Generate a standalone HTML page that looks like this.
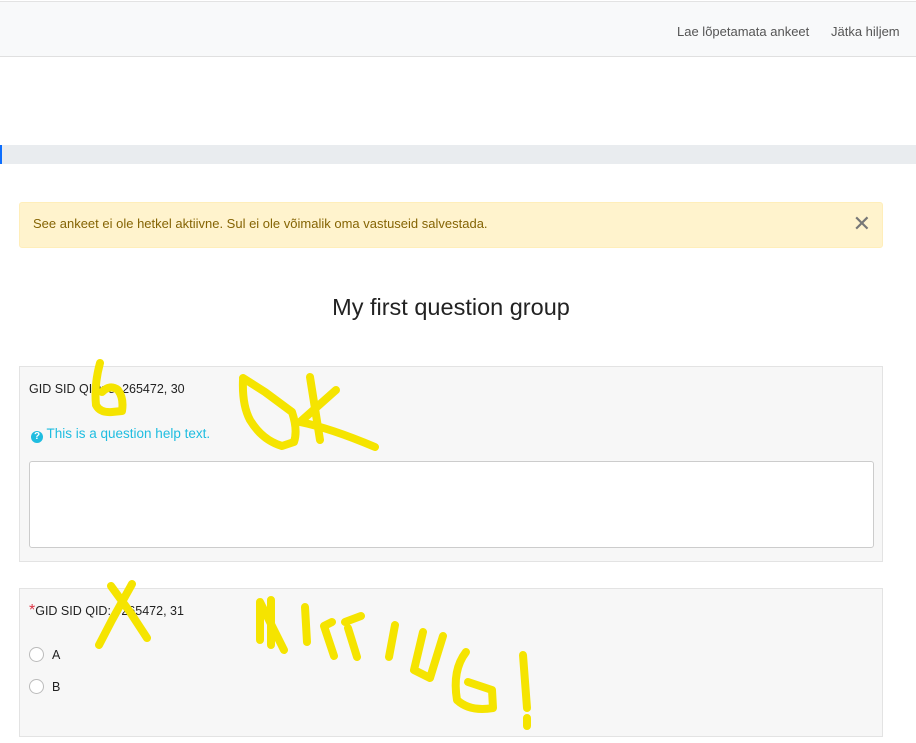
<!DOCTYPE html>
<html><head><meta charset="utf-8"><style>
*{box-sizing:border-box}
body{margin:0;width:916px;height:743px;overflow:hidden;background:#fff;font-family:"Liberation Sans",sans-serif;color:#212529;position:relative}
.nav{position:absolute;left:0;top:1px;width:916px;height:56px;background:#f8f9fa;border-top:1px solid #e3e3e3;border-bottom:1px solid #e0e0e0}
.nav span{position:absolute;top:22px;font-size:13px;color:#555}
.prog{position:absolute;left:0;top:145px;width:916px;height:19px;background:#e9ecef}
.prog i{position:absolute;left:0;top:0;width:2px;height:19px;background:#0d6efd}
.alert{position:absolute;left:19px;top:202px;width:864px;height:46px;background:#fff3cd;border:1px solid #ffeeba;border-radius:3px;color:#856404;font-size:13px;padding:13px 0 0 13px}
.alert b{position:absolute;right:11px;top:8px;font-weight:normal;font-size:22px;color:#777}
h2{position:absolute;top:294px;left:0;width:902px;text-align:center;margin:0;font-weight:normal;font-size:23.5px;color:#222}
.panel{position:absolute;left:19px;width:864px;background:#f7f7f7;border:1px solid #e3e3e3}
.t{position:absolute;font-size:12.5px;color:#222}
.ta{position:absolute;left:9px;top:94px;width:845px;height:87px;background:#fff;border:1px solid #ccc;border-radius:3px}
.r{position:absolute;left:9px;width:15px;height:15px;border:1px solid #bbb;border-radius:50%;background:#fff}
svg{position:absolute;left:0;top:0}
</style></head><body>
<div class="nav"><span style="left:677px">Lae lõpetamata ankeet</span><span style="left:831px">Jätka hiljem</span></div>
<div class="prog"><i></i></div>
<div class="alert">See ankeet ei ole hetkel aktiivne. Sul ei ole võimalik oma vastuseid salvestada.<b>✕</b></div>
<h2>My first question group</h2>
<div class="panel" style="top:366px;height:196px">
<div class="t" style="left:9px;top:15px">GID SID QID: 8, 265472, 30</div>
<div class="t" style="left:11px;top:59px;color:#1fbde0;font-size:13.5px"><span style="display:inline-block;width:12px;height:12px;border-radius:50%;background:#1fbde0;color:#fff;font-size:10px;text-align:center;line-height:12px;font-weight:bold;vertical-align:-1px">?</span> This is a question help text.</div>
<div class="ta"></div>
</div>
<div class="panel" style="top:588px;height:149px">
<div class="t" style="left:9px;top:13px"><span style="color:#dc3545;font-size:16px">*</span>GID SID QID: , 265472, 31</div>
<div class="r" style="top:58px"></div><div class="t" style="left:32px;top:59px">A</div>
<div class="r" style="top:90px"></div><div class="t" style="left:32px;top:91px">B</div>
</div>
<svg width="916" height="743" fill="none" stroke="#f5e400" stroke-width="8" stroke-linecap="round" stroke-linejoin="round">
<path d="M100 363 Q94 385 96 405 Q100 413 112 412 L122 411 Q124 398 118 390 Q110 384 102 392"/>
<path d="M243 378 L265 392 L292 412 Q298 430 294 442 L282 446 Q262 440 250 420 Q242 405 243 380"/>
<path d="M310 377 L320 440 M336 390 L300 422 Q330 428 375 447"/>
<path d="M111 586 L130 612 L147 638 M132 584 L112 620 L99 645"/>
<path d="M260 640 L260 602 L284 650 M271 600 L271 645"/>
<path d="M305 607 L307 642"/>
<path d="M332 622 L324 626 L334 656"/>
<path d="M345 622 L361 616 M348 628 L357 657"/>
<path d="M395 625 L389 657"/>
<path d="M423 632 L414 670 L430 678 L443 636"/>
<path d="M466 652 Q452 670 457 700 Q470 712 493 708 L492 690 L468 682"/>
<path d="M523 655 L527 708 M527 718 L527 726"/>
</svg>
</body></html>
